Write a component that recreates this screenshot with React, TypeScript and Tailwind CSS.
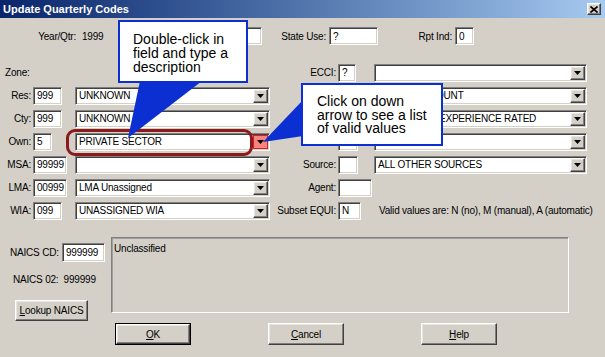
import React from "react";

const sunken =
  "bg-white border border-t-[#808080] border-l-[#808080] border-b-white border-r-white shadow-[inset_1px_1px_0_#404040,inset_-1px_-1px_0_#d4d0c8]";
const raised =
  "bg-[#d4d0c8] border border-t-white border-l-white border-b-[#404040] border-r-[#404040] shadow-[inset_-1px_-1px_0_#808080,inset_1px_1px_0_#e8e6e0]";

const Arrow = () => (
  <svg width="7" height="4" viewBox="0 0 7 4">
    <path d="M0 0h7L3.5 4z" fill="#000" />
  </svg>
);

const Field = ({ className = "", value = "" }: { className?: string; value?: string }) => (
  <div className={`${sunken} ${className} flex items-center pl-[3px] whitespace-nowrap overflow-hidden`}>
    {value}
  </div>
);

const Combo = ({ className = "", text = "", hot = false }: { className?: string; text?: string; hot?: boolean }) => (
  <div className={`${sunken} ${className} h-[18px] flex items-stretch p-px`}>
    <div className="flex-1 pl-[2px] flex items-center overflow-hidden whitespace-nowrap">{text}</div>
    <div
      className={`w-[15px] flex items-center justify-center ${
        hot ? "bg-[#f7837d] border border-[#d42020]" : raised
      }`}
    >
      <Arrow />
    </div>
  </div>
);

const LeftRow = (p: { label: string; value: string; w: string; text: string; hot?: boolean }) => (
  <div className="flex items-center w-[277px]">
    <span className="w-[31px] text-right">{p.label}</span>
    <div className="w-[44px] pl-[2px]">
      <Field className={`${p.w} h-[18px]`} value={p.value} />
    </div>
    <Combo className="w-[195px]" text={p.text} hot={p.hot} />
  </div>
);

const RightRow = (p: { label?: string; value?: string; w: string; text?: string; extra?: React.ReactNode }) => (
  <div className="flex items-center">
    <span className="w-[59px] text-right">{p.label}</span>
    <div className="w-[38px] pl-[2px]">
      <Field className={`${p.w} h-[18px]`} value={p.value} />
    </div>
    {p.text !== undefined && <Combo className="w-[213px]" text={p.text} />}
    {p.extra}
  </div>
);

const Btn = ({ children, className = "", def = false }: { children: React.ReactNode; className?: string; def?: boolean }) =>
  def ? (
    <div className={`border border-black ${className}`}>
      <div className={`${raised} w-full h-full flex items-center justify-center`}>{children}</div>
    </div>
  ) : (
    <div className={`${raised} ${className} flex items-center justify-center`}>{children}</div>
  );

export default function App() {
  return (
    <div className="w-[605px] h-[357px] bg-[#d4d0c8] relative overflow-hidden font-['Liberation_Sans',Arial,sans-serif] text-[10px] tracking-[-0.2px] text-black">
      {/* title bar */}
      <div className="h-[18px] flex items-center justify-between bg-gradient-to-r from-[#0a246a] to-[#a6caf0] pl-[3px] pr-[4px]">
        <span className="text-white font-bold text-[11px] tracking-normal">Update Quarterly Codes</span>
        <div className={`${raised} w-[14px] h-[12px] flex items-center justify-center`}>
          <svg width="8" height="7" viewBox="0 0 8 7">
            <path d="M0.5 0.5L7.5 6.5M7.5 0.5L0.5 6.5" stroke="#000" strokeWidth="1.6" />
          </svg>
        </div>
      </div>

      {/* top row */}
      <div className="flex items-center h-[18px] mt-[9px]">
        <span className="w-[76px] text-right">Year/Qtr:</span>
        <span className="w-[124px] pl-[6px]">1999</span>
        <Field className="w-[62px] h-[18px]" />
        <span className="w-[64px] text-right">State Use:</span>
        <div className="pl-[3px]">
          <Field className="w-[49px] h-[18px]" value="?" />
        </div>
        <span className="w-[74px] text-right">Rpt Ind:</span>
        <div className="pl-[3px]">
          <Field className="w-[19px] h-[18px]" value="0" />
        </div>
      </div>

      {/* code rows */}
      <div className="flex mt-[16px]">
        <div className="flex flex-col">
          <div className="h-[23px] flex items-center pl-[5px]">Zone:</div>
          <div className="h-[23px] flex items-center">
            <LeftRow label="Res:" value="999" w="w-[29px]" text="UNKNOWN" />
          </div>
          <div className="h-[23px] flex items-center">
            <LeftRow label="Cty:" value="999" w="w-[29px]" text="UNKNOWN" />
          </div>
          <div className="h-[23px] flex items-center">
            <LeftRow label="Own:" value="5" w="w-[19px]" text="PRIVATE SECTOR" hot />
          </div>
          <div className="h-[23px] flex items-center">
            <LeftRow label="MSA:" value="99999" w="w-[34px]" text="" />
          </div>
          <div className="h-[23px] flex items-center">
            <LeftRow label="LMA:" value="00999" w="w-[34px]" text="LMA Unassigned" />
          </div>
          <div className="h-[23px] flex items-center">
            <LeftRow label="WIA:" value="099" w="w-[29px]" text="UNASSIGNED WIA" />
          </div>
        </div>
        <div className="flex flex-col">
          <div className="h-[23px] flex items-center">
            <RightRow label="ECCI:" value="?" w="w-[18px]" text="" />
          </div>
          <div className="h-[23px] flex items-center">
            <RightRow w="w-[18px]" text="SINGLE ACCOUNT" />
          </div>
          <div className="h-[23px] flex items-center">
            <RightRow w="w-[18px]" text="STANDARD - EXPERIENCE RATED" />
          </div>
          <div className="h-[23px] flex items-center">
            <RightRow w="w-[20px]" text="" />
          </div>
          <div className="h-[23px] flex items-center">
            <RightRow label="Source:" w="w-[20px]" text="ALL OTHER SOURCES" />
          </div>
          <div className="h-[23px] flex items-center">
            <RightRow label="Agent:" w="w-[34px]" />
          </div>
          <div className="h-[23px] flex items-center">
            <RightRow
              label="Subset EQUI:"
              value="N"
              w="w-[23px]"
              extra={<span className="ml-[5px] whitespace-nowrap">Valid values are: N (no), M (manual), A (automatic)</span>}
            />
          </div>
        </div>
      </div>

      {/* lower section */}
      <div className="flex mt-[15px]">
        <div className="w-[111px] flex flex-col">
          <div className="flex items-center mt-[6px] pl-[10px]">
            <span className="w-[52px]">NAICS CD:</span>
            <Field className="w-[43px] h-[19px]" value="999999" />
          </div>
          <div className="pl-[13px] mt-[12px] leading-[12px]">NAICS 02:&nbsp; 999999</div>
          <div className="pl-[15px] mt-[14px]">
            <Btn className="w-[73px] h-[21px]">
              <span>
                <u>L</u>ookup NAICS
              </span>
            </Btn>
          </div>
        </div>
        <div className="flex flex-col">
          <div className="w-[458px] h-[76px] border border-t-[#808080] border-l-[#808080] border-b-white border-r-white shadow-[inset_1px_1px_0_#a0a0a0] pl-[2px] pt-[3px]">
            Unclassified
          </div>
          <div className="flex mt-[10px] pl-[4px] gap-[77px]">
            <Btn def className="w-[76px] h-[22px]">
              <span>
                <u>O</u>K
              </span>
            </Btn>
            <Btn className="w-[76px] h-[22px]">
              <span>
                <u>C</u>ancel
              </span>
            </Btn>
            <Btn className="w-[76px] h-[22px]">
              <span>
                <u>H</u>elp
              </span>
            </Btn>
          </div>
        </div>
      </div>

      {/* highlight ring around Own description */}
      <div className="absolute left-[66px] top-[129px] w-[187px] h-[27px] border-[3px] border-[#8c1a1a] rounded-[9px]" />

      {/* callout tails */}
      <svg className="absolute inset-0 pointer-events-none" width="605" height="357">
        <polygon points="140,81 202,81 128,138" fill="#0b2fd0" />
        <polygon points="303,100 303,136 263,142" fill="#0b2fd0" />
      </svg>

      {/* callouts */}
      <div className="absolute left-[118px] top-[20px] w-[130px] h-[63px] bg-white border-2 border-[#0b2fd0] pl-[13px] pt-[10px] text-[14px] leading-[14px] tracking-normal">
        Double-click in
        <br />
        field and type a
        <br />
        description
      </div>
      <div className="absolute left-[301px] top-[83px] w-[142px] h-[63px] bg-white border-2 border-[#0b2fd0] pl-[14px] pt-[10px] text-[14px] leading-[13.5px] tracking-normal">
        Click on down
        <br />
        arrow to see a list
        <br />
        of valid values
      </div>
    </div>
  );
}
